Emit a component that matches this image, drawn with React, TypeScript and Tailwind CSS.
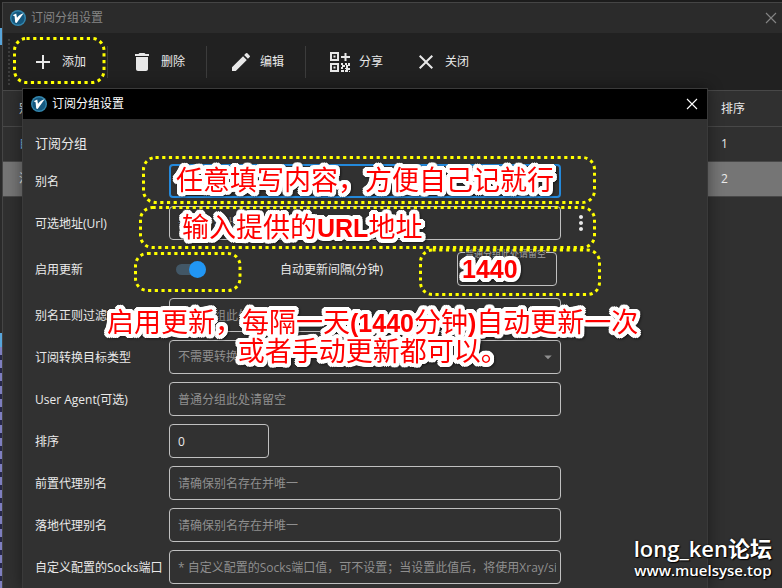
import { ReactNode } from 'react';
import { MdAdd, MdArrowDropDown, MdClose, MdDelete, MdEdit, MdMoreVert } from 'react-icons/md';

const Logo = (): JSX.Element => (
  <svg className="size-4 shrink-0" viewBox="0 0 16 16" aria-hidden="true">
    <circle cx="8" cy="8" r="8" fill="#3487ae" />
    <circle cx="8" cy="8" r="6.6" fill="#15587f" />
    <path
      d="M2.6 5.2 L6.2 3.4 L7 7.8 C8.6 5.4 10.6 4 13.6 3.2 C11.6 6.2 9 9.6 6.6 13 L5.2 12.4 L4.6 6.2 Z"
      fill="#fff"
    />
  </svg>
);

const CloseIcon = (): JSX.Element => (
  <svg className="size-3" viewBox="0 0 12 12" fill="none" stroke="currentColor" strokeWidth="1.1">
    <path d="M1 1 L11 11 M11 1 L1 11" />
  </svg>
);

const QrPlusIcon = (): JSX.Element => (
  <svg className="size-6" viewBox="0 0 24 24" fill="currentColor" aria-hidden="true">
    <path
      fillRule="evenodd"
      d="M2 2h9v9H2z M4 4v5h5V4z M2 13h9v9H2z M4 15v5h5v-5z M5.5 5.5h2v2h-2z M5.5 16.5h2v2h-2z"
    />
    <path d="M16.5 3h2v3h3.5v2h-3.5v3h-2v-3H13V6h3.5z" />
    <path d="M13 13h2v2h2v2h-2v2h-2v-2h1v-2h-1z M17 13h2v2h-2z M20 13h2v3h-2v1h-2v-2h2z M18 17h2v1h2v2h-2v2h-3v-2h1v-1h-1v-1h1z M13 20h3v2h-3z M21 21h1v1h-1z" />
  </svg>
);

const ToolButton = (props: { icon: ReactNode; label: string }): JSX.Element => (
  <button className="flex h-10 items-center gap-[7px] pr-[15px] pl-4">
    <span className="flex size-6 items-center justify-center text-2xl text-[#e8e8e8]">
      {props.icon}
    </span>
    {props.label}
  </button>
);

const Separator = (): JSX.Element => <div className="mx-1.5 h-8 w-px bg-[#3c3c3c]" />;

interface IFieldProps {
  id: string;
  label: string;
  placeholder?: string;
  value?: string;
  short?: boolean;
  focused?: boolean;
  children?: ReactNode;
}

const labelBox = 'w-[134px] shrink-0 pt-0.5';
const fieldBox =
  'h-[34px] rounded-[4px] border bg-transparent pl-2 pr-1 text-xs text-[#eaeaea] outline-none placeholder:text-[#8f8f8f]';

const Field = (props: IFieldProps): JSX.Element => {
  const { id, label, placeholder, value, short, focused, children } = props;

  return (
    <div className="flex items-center">
      <label htmlFor={id} className={labelBox}>
        {label}
      </label>
      <input
        id={id}
        placeholder={placeholder}
        defaultValue={value}
        className={`${fieldBox} ${short ? 'w-[100px]' : 'flex-1'} ${
          focused ? 'border-2 border-[#2489db]' : 'border-[#c0c0c0]'
        }`}
      />
      {!short && <div className="flex w-10 shrink-0 justify-center">{children}</div>}
    </div>
  );
};

const SubscriptionDialog = (): JSX.Element => (
  <section className="absolute top-[88px] right-[74px] bottom-0 left-[22px] overflow-hidden border border-b-0 border-[#3a3a3a] bg-[#313131] shadow-[0_0_14px_rgba(0,0,0,0.45)]">
    <header className="flex h-[30px] items-center gap-[5px] bg-black pr-[9px] pl-2 text-white">
      <Logo />
      <h2 className="flex-1">订阅分组设置</h2>
      <button aria-label="关闭窗口">
        <CloseIcon />
      </button>
    </header>
    <form className="flex flex-col gap-2 pt-[15px] pr-[106px] pl-3">
      <h3 className="mb-1.5 h-4 text-[13px] leading-[18px]">订阅分组</h3>
      <Field id="remarks" label="别名" focused />
      <Field id="url" label="可选地址(Url)" placeholder="普通分组此处请留空">
        <button type="button" aria-label="更多" className="text-2xl text-[#e8e8e8]">
          <MdMoreVert />
        </button>
      </Field>
      <div className="flex h-[42px] items-center">
        <label htmlFor="enabled" className={labelBox}>
          启用更新
        </label>
        <div className="flex w-[111px] shrink-0 items-center pl-[7px]">
          <input
            id="enabled"
            type="checkbox"
            defaultChecked
            className="relative h-[11px] w-[30px] appearance-none rounded-full bg-[#425766] before:absolute before:-top-[3px] before:left-0 before:size-[17px] before:rounded-full before:bg-[#b0b0b0] checked:before:left-[13px] checked:before:bg-[#2196f3]"
          />
        </div>
        <label htmlFor="interval" className="flex-1 pt-0.5">
          自动更新间隔(分钟)
        </label>
        <div className="relative mr-11">
          <input id="interval" className={`${fieldBox} block w-[100px] border-[#c0c0c0]`} />
          <span className="absolute -top-1 left-2 bg-[#313131] text-[9px] leading-[12px] whitespace-nowrap text-[#a0a0a0]">
            普通分组此处请留空
          </span>
        </div>
      </div>
      <Field id="filter" label="别名正则过滤" placeholder="普通分组此处请留空" />
      <div className="flex items-center">
        <label htmlFor="target" className={labelBox}>
          订阅转换目标类型
        </label>
        <div className="relative mr-10 flex flex-1">
          <select
            id="target"
            className="h-[34px] flex-1 appearance-none rounded-[4px] border border-[#c0c0c0] bg-[#313131] px-2 text-xs text-[#8f8f8f]"
          >
            <option>不需要转换时请留空</option>
          </select>
          <MdArrowDropDown className="pointer-events-none absolute top-2 right-1 text-lg text-[#8f8f8f]" />
        </div>
      </div>
      <Field id="agent" label="User Agent(可选)" placeholder="普通分组此处请留空" />
      <Field id="sort" label="排序" value="0" short />
      <Field id="prev" label="前置代理别名" placeholder="请确保别名存在并唯一" />
      <Field id="next" label="落地代理别名" placeholder="请确保别名存在并唯一" />
      <Field
        id="socks"
        label="自定义配置的Socks端口"
        placeholder="* 自定义配置的Socks端口值，可不设置；当设置此值后，将使用Xray/si"
      />
    </form>
  </section>
);

const frames = [
  { x: 14.5, y: 38.5, width: 89.5, height: 44 },
  { x: 143.5, y: 157.5, width: 451, height: 45 },
  { x: 140.5, y: 207.5, width: 454, height: 40 },
  { x: 135.5, y: 253.5, width: 104.5, height: 37 },
  { x: 420.5, y: 250, width: 179, height: 44.5 },
];

// stacked shadows give one solid white outline round the whole line of text
const note =
  "absolute whitespace-nowrap text-[27px] leading-7 text-[#ff0000] font-['Noto_Sans_CJK_SC',sans-serif] [filter:drop-shadow(2px_0_0_#fff)_drop-shadow(-2px_0_0_#fff)_drop-shadow(0_2px_0_#fff)_drop-shadow(0_-2px_0_#fff)_drop-shadow(1px_1px_0_#fff)_drop-shadow(-1px_-1px_0_#fff)_drop-shadow(1px_-1px_0_#fff)_drop-shadow(-1px_1px_0_#fff)_drop-shadow(1px_1px_1px_rgba(0,0,0,0.5))]";

const Latin = (props: { children: ReactNode }): JSX.Element => (
  <span className="font-['Liberation_Sans',sans-serif] text-[25px] leading-none font-bold">
    {props.children}
  </span>
);

const Annotations = (): JSX.Element => (
  <div className="pointer-events-none absolute inset-0">
    <svg className="absolute inset-0 size-full" fill="none" stroke="#ffff00" strokeWidth="3">
      {frames.map((frame) => (
        <rect key={frame.y} {...frame} rx="12" strokeDasharray="3.2 3.5" />
      ))}
    </svg>
    <p className={`${note} top-[165px] left-[176px]`}>任意填写内容，方便自己记就行</p>
    <p className={`${note} top-[212px] left-[182px]`}>
      输入提供的<Latin>URL</Latin>地址
    </p>
    <p className={`${note} top-[253px] left-[462px]`}>
      <Latin>1440</Latin>
    </p>
    <p className={`${note} top-[307px] left-[107px] text-center`}>
      启用更新，每隔一天<Latin>(1440</Latin>分钟<Latin>)</Latin>自动更新一次
      <br />
      或者手动更新都可以。
    </p>
    <div className="absolute right-[10px] bottom-2 text-center font-semibold text-white [text-shadow:0_0_2px_#000,1px_1px_1px_#000]">
      <p className="text-[22px] leading-6">long_ken论坛</p>
      <p className="text-[15px] leading-5">www.muelsyse.top</p>
    </div>
  </div>
);

const rows = [
  { remarks: '自', sort: 1 },
  { remarks: '活', sort: 2 },
];

const App = (): JSX.Element => (
  <main className="relative flex h-screen overflow-hidden bg-[#1c1c1c] pt-0.5 font-['Open_Sans','Noto_Sans_CJK_SC',sans-serif] text-xs text-[#eaeaea]">
    <div className="flex w-0.5 flex-col">
      <div className="h-[26px]" />
      <div className="h-[17px] bg-[#58a6dc]" />
      <div className="h-72 bg-[#2a2a2a]" />
      <div className="h-3.5 bg-[#58a6dc]" />
      <div className="flex-1 bg-[repeating-linear-gradient(#7f7fc0_0_8px,#26264a_8px_13px)]" />
    </div>
    <div className="flex flex-1 flex-col border-t border-l border-[#454545] bg-[#303030]">
      <header className="flex h-[30px] items-center gap-[5px] bg-[#2b2b2b] pr-[5px] pl-[7px] text-[#858585]">
        <Logo />
        <h1 className="flex-1">订阅分组设置</h1>
        <button aria-label="关闭窗口">
          <CloseIcon />
        </button>
      </header>
      <nav className="flex h-[57px] items-center bg-[#212121] pl-[5px]">
        <div className="mr-[5px] h-[46px] w-0.5 bg-[repeating-linear-gradient(#3d3d3d_0_2px,transparent_2px_4px)]" />
        <ToolButton icon={<MdAdd />} label="添加" />
        <Separator />
        <ToolButton icon={<MdDelete />} label="删除" />
        <Separator />
        <ToolButton icon={<MdEdit />} label="编辑" />
        <Separator />
        <ToolButton icon={<QrPlusIcon />} label="分享" />
        <ToolButton icon={<MdClose />} label="关闭" />
      </nav>
      <table className="w-full table-fixed text-left">
        <thead>
          <tr className="h-9 border-y border-[#484848]">
            <th className="pl-4 font-normal">别名</th>
            <th className="w-[77px] pl-4 font-normal">排序</th>
          </tr>
        </thead>
        <tbody>
          {rows.map((row) => (
            <tr
              key={row.sort}
              className={`h-[35px] border-b border-[#484848] ${
                row.sort === 2 ? 'bg-[#757575]' : ''
              }`}
            >
              <td className={`pl-4 ${row.sort === 1 ? 'text-[#7fb4e0]' : ''}`}>{row.remarks}</td>
              <td className="pl-4">{row.sort}</td>
            </tr>
          ))}
        </tbody>
      </table>
    </div>
    <SubscriptionDialog />
    <Annotations />
  </main>
);

export default App;
